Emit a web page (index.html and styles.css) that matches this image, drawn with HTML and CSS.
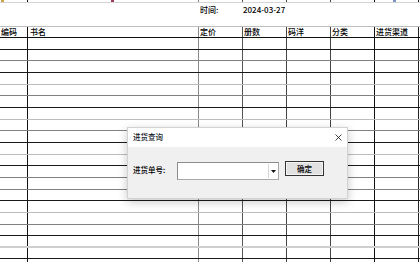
FILE: index.html
```html
<!DOCTYPE html>
<html lang="zh">
<head>
<meta charset="utf-8">
<link rel="stylesheet" href="styles.css">
</head>
<body>
<div class="page">
  <div class="strip">
    <div class="c c1"><span class="mark m1"></span></div>
    <div class="c c2"><span class="mark m2"></span></div>
    <div class="c c3"></div>
    <div class="c c4"></div>
    <div class="c c5"></div>
    <div class="c c6"></div>
    <div class="c c7"><span class="mark m3"></span></div>
    <div class="c c8"></div>
  </div>
  <div class="meta"><span class="meta-label">时间:</span><span class="meta-date">2024-03-27</span></div>
  <div class="sheet">
    <div class="row head">
      <div class="c c1">编码</div>
      <div class="c c2 wide">书名</div>
      <div class="c c3">定价</div>
      <div class="c c4">册数</div>
      <div class="c c5">码洋</div>
      <div class="c c6">分类</div>
      <div class="c c7">进货渠道</div>
      <div class="c c8"></div>
    </div>
    <div class="row l-a"><div class="c c1"></div><div class="c c2"></div><div class="c c3"></div><div class="c c4"></div><div class="c c5"></div><div class="c c6"></div><div class="c c7"></div><div class="c c8"></div></div>
    <div class="row l-b"><div class="c c1"></div><div class="c c2"></div><div class="c c3"></div><div class="c c4"></div><div class="c c5"></div><div class="c c6"></div><div class="c c7"></div><div class="c c8"></div></div>
    <div class="row l-a"><div class="c c1"></div><div class="c c2"></div><div class="c c3"></div><div class="c c4"></div><div class="c c5"></div><div class="c c6"></div><div class="c c7"></div><div class="c c8"></div></div>
    <div class="row l-c"><div class="c c1"></div><div class="c c2"></div><div class="c c3"></div><div class="c c4"></div><div class="c c5"></div><div class="c c6"></div><div class="c c7"></div><div class="c c8"></div></div>
    <div class="row l-b"><div class="c c1"></div><div class="c c2"></div><div class="c c3"></div><div class="c c4"></div><div class="c c5"></div><div class="c c6"></div><div class="c c7"></div><div class="c c8"></div></div>
    <div class="row l-a"><div class="c c1"></div><div class="c c2"></div><div class="c c3"></div><div class="c c4"></div><div class="c c5"></div><div class="c c6"></div><div class="c c7"></div><div class="c c8"></div></div>
    <div class="row l-c"><div class="c c1"></div><div class="c c2"></div><div class="c c3"></div><div class="c c4"></div><div class="c c5"></div><div class="c c6"></div><div class="c c7"></div><div class="c c8"></div></div>
    <div class="row l-b"><div class="c c1"></div><div class="c c2"></div><div class="c c3"></div><div class="c c4"></div><div class="c c5"></div><div class="c c6"></div><div class="c c7"></div><div class="c c8"></div></div>
    <div class="row l-a"><div class="c c1"></div><div class="c c2"></div><div class="c c3"></div><div class="c c4"></div><div class="c c5"></div><div class="c c6"></div><div class="c c7"></div><div class="c c8"></div></div>
    <div class="row l-c"><div class="c c1"></div><div class="c c2"></div><div class="c c3"></div><div class="c c4"></div><div class="c c5"></div><div class="c c6"></div><div class="c c7"></div><div class="c c8"></div></div>
    <div class="row l-a"><div class="c c1"></div><div class="c c2"></div><div class="c c3"></div><div class="c c4"></div><div class="c c5"></div><div class="c c6"></div><div class="c c7"></div><div class="c c8"></div></div>
    <div class="row l-b"><div class="c c1"></div><div class="c c2"></div><div class="c c3"></div><div class="c c4"></div><div class="c c5"></div><div class="c c6"></div><div class="c c7"></div><div class="c c8"></div></div>
    <div class="row l-b"><div class="c c1"></div><div class="c c2"></div><div class="c c3"></div><div class="c c4"></div><div class="c c5"></div><div class="c c6"></div><div class="c c7"></div><div class="c c8"></div></div>
    <div class="row l-a"><div class="c c1"></div><div class="c c2"></div><div class="c c3"></div><div class="c c4"></div><div class="c c5"></div><div class="c c6"></div><div class="c c7"></div><div class="c c8"></div></div>
    <div class="row l-c"><div class="c c1"></div><div class="c c2"></div><div class="c c3"></div><div class="c c4"></div><div class="c c5"></div><div class="c c6"></div><div class="c c7"></div><div class="c c8"></div></div>
    <div class="row l-b"><div class="c c1"></div><div class="c c2"></div><div class="c c3"></div><div class="c c4"></div><div class="c c5"></div><div class="c c6"></div><div class="c c7"></div><div class="c c8"></div></div>
    <div class="row l-a"><div class="c c1"></div><div class="c c2"></div><div class="c c3"></div><div class="c c4"></div><div class="c c5"></div><div class="c c6"></div><div class="c c7"></div><div class="c c8"></div></div>
    <div class="row l-d"><div class="c c1"></div><div class="c c2"></div><div class="c c3"></div><div class="c c4"></div><div class="c c5"></div><div class="c c6"></div><div class="c c7"></div><div class="c c8"></div></div>
    <div class="row l-a"><div class="c c1"></div><div class="c c2"></div><div class="c c3"></div><div class="c c4"></div><div class="c c5"></div><div class="c c6"></div><div class="c c7"></div><div class="c c8"></div></div>
    <div class="row l-a"><div class="c c1"></div><div class="c c2"></div><div class="c c3"></div><div class="c c4"></div><div class="c c5"></div><div class="c c6"></div><div class="c c7"></div><div class="c c8"></div></div>
  </div>

  <div class="dialog">
    <div class="dlg-title">
      <span class="dlg-title-text">进货查询</span>
      <svg class="dlg-close" width="7" height="7" viewBox="0 0 7 7"><path d="M0.5 0.5 L6.5 6.5 M6.5 0.5 L0.5 6.5" stroke="#111" stroke-width="0.8" fill="none"/></svg>
    </div>
    <div class="dlg-body">
      <span class="dlg-label">进货单号:</span>
      <div class="combo">
        <div class="combo-field"></div>
        <div class="combo-btn"><svg width="5" height="3" viewBox="0 0 5 3"><path d="M0 0 H5 L2.5 3 Z" fill="#111"/></svg></div>
      </div>
      <div class="btn"><span>确定</span></div>
    </div>
  </div>
</div>
</body>
</html>
```

FILE: styles.css
```css
* { box-sizing: border-box; }
html, body { margin: 0; padding: 0; background: #fff; }
body {
  width: 420px;
  height: 262px;
  overflow: hidden;
  font-family: "Noto Sans CJK SC", "Noto Sans", sans-serif;
  color: #000;
}
.page { position: relative; width: 420px; height: 262px; overflow: hidden; }

.strip, .row {
  display: grid;
  grid-template-columns: 28px 171px 44px 44px 44px 44px 44px 1fr;
}
.strip { height: 3px; border-bottom: 1px solid #d4d4d4; }
.strip .c { height: 2px; position: relative; }
.mark { display: block; width: 3px; height: 2px; }
.m1 { margin-left: 1px; background: #c9a24a; }
.m2 { margin-left: 83px; background: #9a3b63; }
.m3 { margin-left: 18px; background: #7b93c8; }

.c { border-right: 1px solid #444; min-width: 0; }
.c1 { border-right-color: #111; }
.c2 { border-right-color: #8a8a8a; }
.c3 { border-right-color: #555; }
.c4 { border-right-color: #444; }
.c5 { border-right-color: #444; }
.c6 { border-right-color: #111; }
.c7 { border-right-color: #222; }
.c8 { border-right: none; }

.meta {
  height: 23px;
  padding: 2px 0 0 200px;
  display: flex;
  align-items: flex-start;
  font-size: 8px;
  line-height: 10px;
  font-weight: 500;
}
.meta-label { width: 43px; }

.sheet { border-top: 1px solid #bdbdbd; }
.row {
  height: 11.6667px;
  border-bottom: 1px solid #111;
}
.row.head {
  height: 11px;
  font-size: 8px;
  line-height: 10px;
  font-weight: 500;
  white-space: nowrap;
}
.head .c { padding-left: 1px; overflow: hidden; }
.head .wide { padding-left: 2px; }
.l-a { border-bottom-color: #1a1a1a; }
.l-b { border-bottom-color: #808080; }
.l-c { border-bottom-color: #bcbcbc; }
.l-d { border-bottom: 2px solid #cfcfcf; }

.dialog {
  position: absolute;
  left: 127px;
  top: 127px;
  width: 221px;
  height: 72px;
  background: #f0f0f0;
  border: 1px solid rgba(0,0,0,0.12);
  box-shadow: 0 3px 9px rgba(0,0,0,0.22);
  display: flex;
  flex-direction: column;
}
.dlg-title {
  height: 19px;
  background: #fff;
  display: flex;
  align-items: center;
  justify-content: space-between;
  padding: 0 5px 1px 5px;
  font-size: 7.5px;
  line-height: 10px;
  font-weight: 500;
  color: #101828;
}
.dlg-close { display: block; }
.dlg-body {
  flex: 1;
  display: flex;
  align-items: flex-start;
  padding: 14px 0 0 5px;
  font-size: 7.5px;
  line-height: 10px;
  font-weight: 500;
}
.dlg-label { width: 44px; margin-top: 4px; }
.combo {
  width: 102px;
  height: 18px;
  margin-top: 1px;
  display: flex;
  background: #fff;
  border: 1px solid #a8a8a8;
  border-top-color: #8c8c8c;
  border-left-color: #8c8c8c;
}
.combo-field { flex: 1; }
.combo-btn {
  width: 9px;
  margin: 1px;
  background: #fff;
  border-left: 1px solid #d8d8d8;
  display: flex;
  align-items: center;
  justify-content: center;
  padding-top: 1px;
}
.combo-btn svg { display: block; }
.btn {
  margin-left: 6px;
  width: 39px;
  height: 15px;
  border: 1px solid #333;
  background: #e1e1e1;
  box-shadow: inset 0 0 0 1px #f4f4f4;
  display: flex;
  align-items: center;
  justify-content: center;
  font-size: 7.5px;
  line-height: 10px;
}
```
